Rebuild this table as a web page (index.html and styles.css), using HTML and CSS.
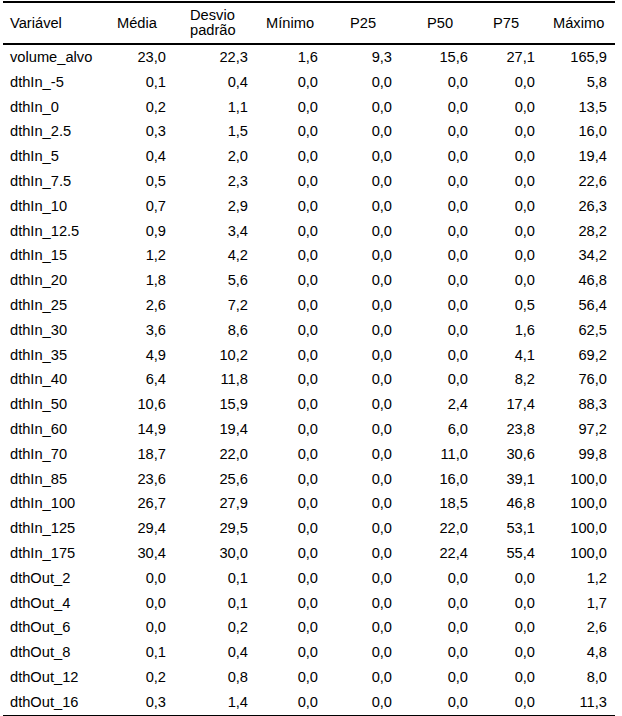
FILE: index.html
```html
<!DOCTYPE html>
<html lang="pt">
<head>
<meta charset="utf-8">
<title>Estatísticas descritivas</title>
<link rel="stylesheet" href="styles.css">
</head>
<body>
<table class="stats">
  <colgroup>
    <col class="c-var"><col class="c-media"><col class="c-dp"><col class="c-min"><col class="c-p25"><col class="c-p50"><col class="c-p75"><col class="c-max">
  </colgroup>
  <thead>
    <tr><th>Variável</th><th>Média</th><th>Desvio padrão</th><th>Mínimo</th><th>P25</th><th>P50</th><th>P75</th><th>Máximo</th></tr>
  </thead>
  <tbody>
    <tr><td>volume_alvo</td><td>23,0</td><td>22,3</td><td>1,6</td><td>9,3</td><td>15,6</td><td>27,1</td><td>165,9</td></tr>
    <tr><td>dthIn_-5</td><td>0,1</td><td>0,4</td><td>0,0</td><td>0,0</td><td>0,0</td><td>0,0</td><td>5,8</td></tr>
    <tr><td>dthIn_0</td><td>0,2</td><td>1,1</td><td>0,0</td><td>0,0</td><td>0,0</td><td>0,0</td><td>13,5</td></tr>
    <tr><td>dthIn_2.5</td><td>0,3</td><td>1,5</td><td>0,0</td><td>0,0</td><td>0,0</td><td>0,0</td><td>16,0</td></tr>
    <tr><td>dthIn_5</td><td>0,4</td><td>2,0</td><td>0,0</td><td>0,0</td><td>0,0</td><td>0,0</td><td>19,4</td></tr>
    <tr><td>dthIn_7.5</td><td>0,5</td><td>2,3</td><td>0,0</td><td>0,0</td><td>0,0</td><td>0,0</td><td>22,6</td></tr>
    <tr><td>dthIn_10</td><td>0,7</td><td>2,9</td><td>0,0</td><td>0,0</td><td>0,0</td><td>0,0</td><td>26,3</td></tr>
    <tr><td>dthIn_12.5</td><td>0,9</td><td>3,4</td><td>0,0</td><td>0,0</td><td>0,0</td><td>0,0</td><td>28,2</td></tr>
    <tr><td>dthIn_15</td><td>1,2</td><td>4,2</td><td>0,0</td><td>0,0</td><td>0,0</td><td>0,0</td><td>34,2</td></tr>
    <tr><td>dthIn_20</td><td>1,8</td><td>5,6</td><td>0,0</td><td>0,0</td><td>0,0</td><td>0,0</td><td>46,8</td></tr>
    <tr><td>dthIn_25</td><td>2,6</td><td>7,2</td><td>0,0</td><td>0,0</td><td>0,0</td><td>0,5</td><td>56,4</td></tr>
    <tr><td>dthIn_30</td><td>3,6</td><td>8,6</td><td>0,0</td><td>0,0</td><td>0,0</td><td>1,6</td><td>62,5</td></tr>
    <tr><td>dthIn_35</td><td>4,9</td><td>10,2</td><td>0,0</td><td>0,0</td><td>0,0</td><td>4,1</td><td>69,2</td></tr>
    <tr><td>dthIn_40</td><td>6,4</td><td>11,8</td><td>0,0</td><td>0,0</td><td>0,0</td><td>8,2</td><td>76,0</td></tr>
    <tr><td>dthIn_50</td><td>10,6</td><td>15,9</td><td>0,0</td><td>0,0</td><td>2,4</td><td>17,4</td><td>88,3</td></tr>
    <tr><td>dthIn_60</td><td>14,9</td><td>19,4</td><td>0,0</td><td>0,0</td><td>6,0</td><td>23,8</td><td>97,2</td></tr>
    <tr><td>dthIn_70</td><td>18,7</td><td>22,0</td><td>0,0</td><td>0,0</td><td>11,0</td><td>30,6</td><td>99,8</td></tr>
    <tr><td>dthIn_85</td><td>23,6</td><td>25,6</td><td>0,0</td><td>0,0</td><td>16,0</td><td>39,1</td><td>100,0</td></tr>
    <tr><td>dthIn_100</td><td>26,7</td><td>27,9</td><td>0,0</td><td>0,0</td><td>18,5</td><td>46,8</td><td>100,0</td></tr>
    <tr><td>dthIn_125</td><td>29,4</td><td>29,5</td><td>0,0</td><td>0,0</td><td>22,0</td><td>53,1</td><td>100,0</td></tr>
    <tr><td>dthIn_175</td><td>30,4</td><td>30,0</td><td>0,0</td><td>0,0</td><td>22,4</td><td>55,4</td><td>100,0</td></tr>
    <tr><td>dthOut_2</td><td>0,0</td><td>0,1</td><td>0,0</td><td>0,0</td><td>0,0</td><td>0,0</td><td>1,2</td></tr>
    <tr><td>dthOut_4</td><td>0,0</td><td>0,1</td><td>0,0</td><td>0,0</td><td>0,0</td><td>0,0</td><td>1,7</td></tr>
    <tr><td>dthOut_6</td><td>0,0</td><td>0,2</td><td>0,0</td><td>0,0</td><td>0,0</td><td>0,0</td><td>2,6</td></tr>
    <tr><td>dthOut_8</td><td>0,1</td><td>0,4</td><td>0,0</td><td>0,0</td><td>0,0</td><td>0,0</td><td>4,8</td></tr>
    <tr><td>dthOut_12</td><td>0,2</td><td>0,8</td><td>0,0</td><td>0,0</td><td>0,0</td><td>0,0</td><td>8,0</td></tr>
    <tr><td>dthOut_16</td><td>0,3</td><td>1,4</td><td>0,0</td><td>0,0</td><td>0,0</td><td>0,0</td><td>11,3</td></tr>
  </tbody>
</table>
</body>
</html>
```

FILE: styles.css
```css
html, body {
  margin: 0;
  padding: 0;
  background: #ffffff;
}

body {
  font-family: "Liberation Sans", Arial, sans-serif;
  font-size: 14.67px;
  color: #000000;
}

.stats {
  margin: 1px 0 0 3px;
  width: 612px;
  table-layout: fixed;
  border-collapse: separate;
  border-spacing: 0;
}

.c-var { width: 107px; }
.c-media { width: 73px; }
.c-dp { width: 76px; }
.c-min { width: 84px; }
.c-p25 { width: 77px; }
.c-p50 { width: 66px; }
.c-p75 { width: 60px; }
.c-max { width: 69px; }

.stats th {
  font-weight: normal;
  text-align: left;
  vertical-align: middle;
  line-height: 15px;
  padding: 5px 0 5px 7px;
  border-top: 2px solid #000000;
  border-bottom: 2px solid #000000;
}

.stats td {
  line-height: 24.8px;
  padding: 0;
  text-align: right;
  white-space: nowrap;
}

.stats td:first-child {
  text-align: left;
  padding-left: 7px;
}

.stats td:nth-child(2) { padding-right: 17px; }
.stats td:nth-child(3) { padding-right: 11px; }
.stats td:nth-child(4) { padding-right: 25px; }
.stats td:nth-child(5) { padding-right: 28px; }
.stats td:nth-child(6) { padding-right: 18px; }
.stats td:nth-child(7) { padding-right: 11px; }
.stats td:nth-child(8) { padding-right: 8px; }

.stats tbody tr:last-child td {
  border-bottom: 2px solid #000000;
}
```
